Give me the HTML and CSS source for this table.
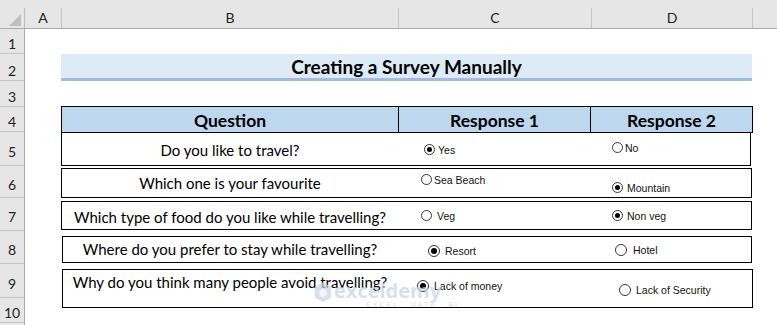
FILE: index.html
```html
<!DOCTYPE html>
<html>
<head>
<meta charset="utf-8">
<link rel="stylesheet" href="styles.css">
</head>
<body>
<div class="sheet">
  <div class="colhead">
    <div class="corner"><span class="tri"></span></div>
    <div class="ch ch-a">A</div>
    <div class="ch ch-b">B</div>
    <div class="ch ch-c">C</div>
    <div class="ch ch-d">D</div>
    <div class="ch ch-e"></div>
  </div>
  <div class="body">
    <div class="rowhead">
      <div class="rh h1">1</div>
      <div class="rh h2">2</div>
      <div class="rh h3">3</div>
      <div class="rh h4">4</div>
      <div class="rh h5">5</div>
      <div class="rh h6">6</div>
      <div class="rh h7">7</div>
      <div class="rh h8">8</div>
      <div class="rh h9">9</div>
      <div class="rh h10">10</div>
      <div class="rh h11"></div>
    </div>
    <div class="content">
      <div class="title">Creating a Survey Manually</div>
      <div class="thead">
        <div class="th th-q">Question</div>
        <div class="th th-r1">Response 1</div>
        <div class="th th-r2">Response 2</div>
      </div>
      <div class="qrow q5">
        <div class="q">Do you like to travel?</div>
        <div class="opt c"><span class="radio on"></span><span class="lbl">Yes</span></div>
        <div class="opt d"><span class="radio"></span><span class="lbl">No</span></div>
      </div>
      <div class="qrow q6">
        <div class="q">Which one is your favourite</div>
        <div class="opt c"><span class="radio"></span><span class="lbl">Sea Beach</span></div>
        <div class="opt d"><span class="radio on"></span><span class="lbl">Mountain</span></div>
      </div>
      <div class="qrow q7">
        <div class="q">Which type of food do you like while travelling?</div>
        <div class="opt c"><span class="radio"></span><span class="lbl">Veg</span></div>
        <div class="opt d"><span class="radio on"></span><span class="lbl">Non veg</span></div>
      </div>
      <div class="qrow q8">
        <div class="q">Where do you prefer to stay while travelling?</div>
        <div class="opt c"><span class="radio on"></span><span class="lbl">Resort</span></div>
        <div class="opt d"><span class="radio"></span><span class="lbl">Hotel</span></div>
      </div>
      <div class="qrow q9">
        <div class="q">Why do you think many people avoid travelling?</div>
        <div class="opt c"><span class="radio on"></span><span class="lbl">Lack of money</span></div>
        <div class="opt d"><span class="radio"></span><span class="lbl">Lack of Security</span></div>
      </div>
    </div>
  </div>
  <div class="watermark">
    <svg class="wm-icon" width="18" height="24" viewBox="0 0 20 26">
      <path d="M10 1 L19 6 L19 18 L10 23 L1 18 L1 6 Z" fill="#c8d4e4"/>
      <path d="M10 8 L14 10.5 L14 15.5 L10 18 L6 15.5 L6 10.5 Z" fill="#ffffff" opacity="0.7"/>
    </svg>
    <div class="wm-text">
      <div class="wm-name">exceldemy</div>
      <div class="wm-sub">EXCEL · DATA · BI</div>
    </div>
  </div>
</div>
</body>
</html>
```

FILE: styles.css
```css
* { box-sizing: border-box; }
html, body { margin: 0; padding: 0; background: #fff; }
body { width: 777px; height: 325px; overflow: hidden; }

.sheet { position: relative; width: 777px; height: 325px; font-family: Lato, "Liberation Sans", sans-serif; color: #000; }

/* column header */
.colhead { display: flex; align-items: flex-end; height: 29px; background: #e6e6e6; border-bottom: 1px solid #ababab; }
.corner { position: relative; width: 25px; height: 20px; border-right: 1px solid #bcbcbc; }
.tri { position: absolute; right: 3px; bottom: 2px; width: 0; height: 0; border-left: 12px solid transparent; border-bottom: 12px solid #bfbfbf; }
.ch { height: 20px; border-right: 1px solid #c4c4c4; display: flex; align-items: center; justify-content: center; font-size: 14px; color: #222; padding-bottom: 1px; }
.ch-a { width: 37px; }
.ch-b { width: 337px; }
.ch-c { width: 193px; }
.ch-d { width: 161px; }
.ch-e { flex: 1; border-right: none; }

/* body */
.body { display: flex; }
.rowhead { width: 25px; background: #e6e6e6; border-right: 1px solid #ababab; display: flex; flex-direction: column; }
.rh { border-bottom: 1px solid #c4c4c4; display: flex; align-items: flex-end; justify-content: center; font-size: 14px; color: #222; padding-bottom: 1px; }
.h1 { height: 25px; }
.h2 { height: 27px; }
.h3 { height: 26px; }
.h4 { height: 25px; }
.h5 { height: 34px; padding-bottom: 5px; }
.h6 { height: 32px; padding-bottom: 4px; }
.h7 { height: 33px; padding-bottom: 5px; }
.h8 { height: 33px; padding-bottom: 5px; }
.h9 { height: 34px; padding-bottom: 5px; }
.h10 { height: 25px; }
.h11 { height: 10px; border-bottom: none; }

.content { flex: 1; padding-left: 36px; display: flex; flex-direction: column; align-items: flex-start; }

.title { margin-top: 25px; width: 691px; height: 27px; background: #ddebf7; border-bottom: 3px solid #a6b9df; display: flex; align-items: center; justify-content: center; font-weight: bold; font-size: 19px; padding-top: 1px; }

.thead { margin-top: 25px; width: 692px; height: 27px; background: #bdd7ee; border: 1px solid #000; display: grid; grid-template-columns: 336px 193px 1fr; }
.th { display: flex; align-items: center; justify-content: center; font-weight: bold; font-size: 17.5px; padding-top: 1px; }
.th-r1 { border-left: 1px solid #000; border-right: 1px solid #000; }

.qrow { border: 1px solid #000; display: grid; grid-template-columns: 336px 193px 1fr; align-items: start; background: #fff; }
.q { text-align: center; font-size: 15px; line-height: 20px; white-space: nowrap; }
.opt { display: flex; align-items: center; height: 13px; gap: 4px; font-family: "Liberation Sans", Arial, sans-serif; font-size: 10.5px; color: #111; }
.radio { width: 11px; height: 11px; border-radius: 50%; border: 1px solid #333; background: #fff; display: flex; align-items: center; justify-content: center; flex: none; }
.radio.on::after { content: ""; width: 5px; height: 5px; border-radius: 50%; background: #000; }
.q8 .radio, .q9 .radio { width: 12px; height: 12px; }
.q8 .radio.on::after, .q9 .radio.on::after { width: 6px; height: 6px; }

.q5 { margin-top: -1px; width: 690px; height: 34px; }
.q5 .q { padding-top: 7px; }
.q5 .c { margin-top: 10px; padding-left: 26px; gap: 3px; }
.q5 .d { margin-top: 8px; padding-left: 21px; gap: 2px; }

.q6 { margin-top: 2px; width: 691px; height: 30px; }
.q6 .q { padding-top: 4px; }
.q6 .c { margin-top: 4px; padding-left: 23px; gap: 2px; }
.q6 .d { margin-top: 12px; padding-left: 21px; }

.q7 { margin-top: 3px; width: 691px; height: 29px; }
.q7 .q { padding-top: 5px; }
.q7 .c { margin-top: 7px; padding-left: 23px; gap: 5px; }
.q7 .d { margin-top: 7px; padding-left: 21px; }

.q8 { margin-top: 6px; margin-left: 1px; width: 690px; height: 27px; }
.q8 .q { padding-top: 2px; padding-right: 2px; }
.q8 .c { margin-top: 7px; padding-left: 29px; gap: 5px; }
.q8 .d { margin-top: 6px; padding-left: 23px; gap: 6px; }

.q9 { margin-top: 6px; margin-left: 1px; width: 691px; height: 39px; }
.q9 .q { padding-top: 2px; padding-right: 2px; }
.q9 .c { margin-top: 9px; padding-left: 18px; gap: 5px; }
.q9 .d { margin-top: 13px; padding-left: 27px; gap: 5px; }

/* watermark overlay */
.watermark { position: absolute; left: 314px; top: 281px; display: flex; align-items: flex-start; gap: 2px; opacity: 0.7; pointer-events: none; }
.wm-text { display: flex; flex-direction: column; }
.wm-name { font-family: "Open Sans", sans-serif; font-weight: bold; font-size: 20px; line-height: 19px; color: #c7d3e3; }
.wm-sub { font-family: "Liberation Sans", sans-serif; font-size: 7px; line-height: 9px; letter-spacing: 2px; color: #c7d3e3; padding-left: 32px; }
```
